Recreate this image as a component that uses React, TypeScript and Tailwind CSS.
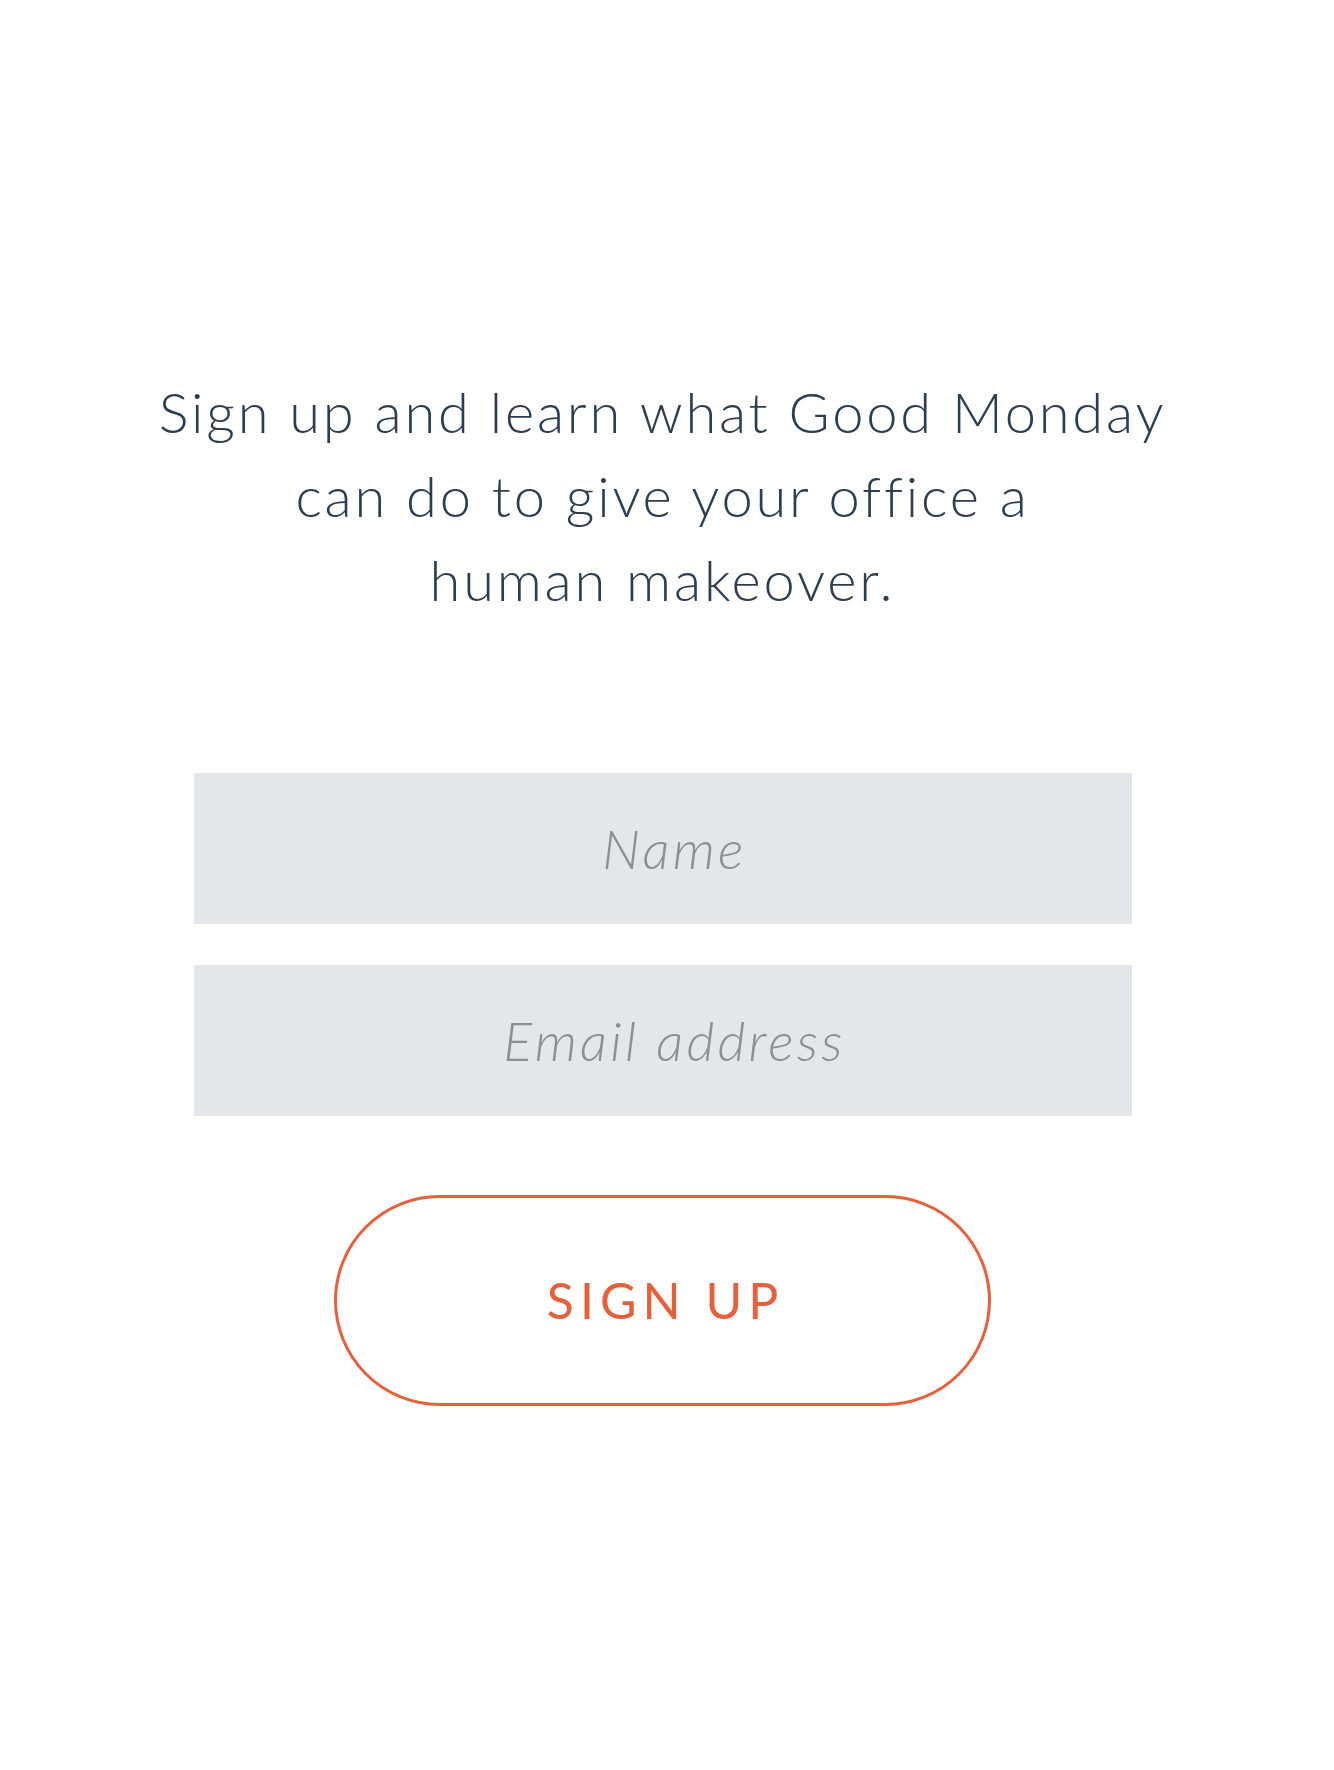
import React from 'react';

const App: React.FC = () => {
  return (
    <div
      className="min-h-[1770px] w-full bg-white flex flex-col items-center pr-[9px]"
      style={{ fontFamily: 'Lato, "Open Sans", sans-serif' }}
    >
      {/* Heading */}
      <h1 className="mt-[370px] text-center text-[56px] leading-[84px] font-light tracking-[0.05em] text-[#2d3e50]">
        Sign up and learn what Good Monday
        <br />
        can do to give your office a
        <br />
        human makeover.
      </h1>

      {/* Form */}
      <form className="mt-[151px] flex flex-col items-center" onSubmit={(e) => e.preventDefault()}>
        <input
          type="text"
          placeholder="Name"
          className="w-[938px] h-[151px] pl-[24px] bg-[#e3e7ea] text-center text-[54px] italic font-light tracking-[0.06em] text-[#2d3e50] placeholder:text-[#8a9095] outline-none"
        />
        <input
          type="email"
          placeholder="Email address"
          className="mt-[41px] w-[938px] h-[151px] pl-[24px] bg-[#e3e7ea] text-center text-[54px] italic font-light tracking-[0.06em] text-[#2d3e50] placeholder:text-[#8a9095] outline-none"
        />
        <button
          type="submit"
          className="mt-[79px] w-[657px] h-[211px] rounded-full border-[3px] border-[#e5603b] bg-white text-[#e5603b] text-[50px] font-normal tracking-[0.12em] pl-[0.12em]"
        >
          SIGN UP
        </button>
      </form>
    </div>
  );
};

export default App;
